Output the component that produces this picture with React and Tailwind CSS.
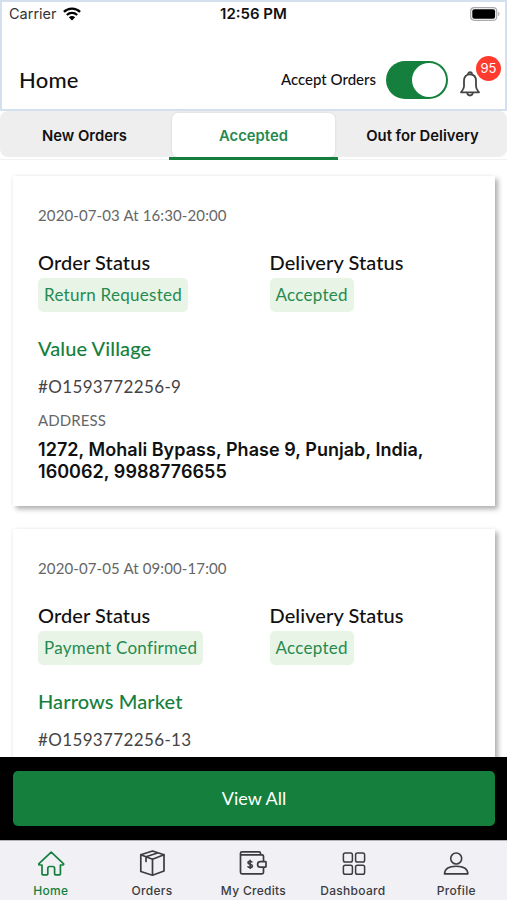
import React from "react";

const orders = [
  {
    id: "#O1593772256-9",
    date: "2020-07-03 At 16:30-20:00",
    status: "Return Requested",
    delivery: "Accepted",
    store: "Value Village",
    address: "1272, Mohali Bypass, Phase 9, Punjab, India, 160062, 9988776655",
  },
  {
    id: "#O1593772256-13",
    date: "2020-07-05 At 09:00-17:00",
    status: "Payment Confirmed",
    delivery: "Accepted",
    store: "Harrows Market",
  },
];

// Bottom tab icons
const HomeIcon = () => (
  <svg width="28" height="28" viewBox="0 0 28 28" fill="none" stroke="currentColor" strokeWidth="1.7" strokeLinejoin="round">
    <path d="M14.200 2.200 2 13.700c-.5.5-.3 1.300.5 1.300H5v9c0 .6.300.9.900.9h4c.6 0 .9-.3.900-.9v-5.500c0-1.300.8-2 1.900-2h3c1.100 0 1.900.7 1.900 2V24c0 .6.300.9.900.9h4c.6 0 .9-.3.900-.9v-9h2.500c.8 0 1-.8.500-1.300z" />
  </svg>
);

const BoxIcon = () => (
  <svg width="28" height="28" viewBox="0 0 28 28" fill="none" stroke="currentColor" strokeWidth="1.7" strokeLinejoin="round" strokeLinecap="round">
    <path d="M14.500 1 26 4.700V21L14.500 25.200 2.800 21.500V4.700z" />
    <path d="M2.800 4.700 14.500 9.200 26 4.700M14.500 9.200V25M8 11.500V6.800L19.500 3" />
  </svg>
);

const WalletIcon = () => (
  <svg width="30" height="28" viewBox="0 0 30 28" fill="none" stroke="currentColor" strokeWidth="1.700" strokeLinejoin="round">
    <path d="M25.500 11.500V6.300c0-.9-.6-1.500-1.500-1.500H2.500V22.300c0 .9.600 1.500 1.500 1.500h20c.9 0 1.500-.6 1.500-1.500v-5" />
    <path d="M2.500 4.800V3.300c0-.9.600-1.500 1.500-1.500h17c.9 0 1.500.6 1.500 1.500v1.500" />
    <path d="M27.500 11.700h-5.200c-1.700 0-2.700 1.200-2.700 2.700s1 2.700 2.700 2.700h5.200c.3 0 .5-.2.500-.5v-4.400c0-.3-.2-.5-.5-.5z" />
    <path d="M14.200 12.500c-.2-.8-1-1.200-2.100-1.200s-2.100.5-2.100 1.400c0 2.100 4.400 1.100 4.400 3.200 0 1-.9 1.500-2.300 1.500-1.200 0-2.200-.4-2.400-1.300M12.100 9.700v9.300" strokeWidth="1.600" />
  </svg>
);

const GridIcon = () => (
  <svg width="28" height="28" viewBox="0 0 28 28" fill="none" stroke="currentColor" strokeWidth="1.500">
    <rect x="4.400" y="3" width="9" height="9" rx="1.800" />
    <rect x="16.600" y="3" width="9" height="9" rx="1.800" />
    <rect x="4.400" y="15.200" width="9" height="9" rx="1.800" />
    <rect x="16.600" y="15.200" width="9" height="9" rx="1.800" />
  </svg>
);

const ProfileIcon = () => (
  <svg width="28" height="28" viewBox="0 0 28 28" fill="none" stroke="currentColor" strokeWidth="1.600" strokeLinejoin="round">
    <circle cx="14.200" cy="8.500" r="5.500" />
    <path d="M2.500 23.900c.2-4.900 3.900-7.700 11.700-7.700s11.500 2.800 11.700 7.700z" />
  </svg>
);

const BellIcon = () => (
  <svg width="22" height="26" viewBox="0 0 22 26" fill="none" stroke="currentColor" strokeWidth="1.800" strokeLinejoin="round">
    <path d="M11 3.300c-4 0-6 2.800-6 6.500v5.700c0 2-1 3.200-3 5.800h18c-2-2.600-3-3.800-3-5.800V9.800c0-3.700-2-6.500-6-6.500z" />
    <path d="M9 3.500c0-3 4-3 4 0M8.200 21.300c0 2 1.200 3.200 2.800 3.200s2.800-1.200 2.800-3.200" />
  </svg>
);

const WifiIcon = () => (
  <svg width="18" height="14" viewBox="0 0 18 14" fill="none" stroke="#000" strokeWidth="2.300">
    <path d="M.9 4.900C5.400.5 12.600.5 17.100 4.900M3.800 8c3-2.800 7.400-2.800 10.400 0" />
    <path d="M5.800 10.300c1.900-1.700 4.500-1.700 6.400 0L9 13.500z" fill="#000" stroke="none" />
  </svg>
);

const BatteryIcon = () => (
  <svg width="30" height="14" viewBox="0 0 30 14">
    <rect x=".7" y=".7" width="26" height="12.600" rx="3.500" fill="#fff" stroke="#aaa" strokeWidth="1.200" />
    <rect x="2.300" y="2.300" width="22.800" height="9.400" rx="2" fill="#000" />
    <path d="M28.200 4.800c1.700.6 1.700 3.800 0 4.400z" fill="#aaa" />
  </svg>
);

const tabs = [
  { label: "Home", icon: HomeIcon, className: "text-[#15803d]" },
  { label: "Orders", icon: BoxIcon, className: "text-[#3c3c40]" },
  { label: "My Credits", icon: WalletIcon, className: "text-[#3c3c40]" },
  { label: "Dashboard", icon: GridIcon, className: "pr-[4px] text-[#3c3c40]" },
  { label: "Profile", icon: ProfileIcon, className: "text-[#3c3c40]" },
];

function StatusBlock({ title, value }) {
  return (
    <div className="flex flex-col items-start">
      <p className="text-[20px] leading-[28px] font-medium tracking-[0.08px] text-[#111] whitespace-nowrap">{title}</p>
      <span className="mt-[2px] h-[34px] rounded-[5px] bg-[#e8f5e6] px-1.5 text-[17px] leading-[33px] tracking-[0.28px] text-[#268a50] whitespace-nowrap">
        {value}
      </span>
    </div>
  );
}

function OrderCard({ order }) {
  return (
    <div className="h-[330px] shrink-0 bg-white px-[25px] pt-[28px] shadow-[3px_3px_5px_rgba(0,0,0,0.32),-1px_-1px_3px_rgba(0,0,0,0.03)]">
      <p className="text-[15px] leading-[22px] tracking-[0.12px] text-[#666]">{order.date}</p>
      <div className="mt-[22px] grid grid-cols-[231.500px_1fr]">
        <StatusBlock title="Order Status" value={order.status} />
        <StatusBlock title="Delivery Status" value={order.delivery} />
      </div>
      <p className="mt-[22px] text-[20px] leading-[28px] font-medium tracking-[0.1px] text-[#15803d]">{order.store}</p>
      <p className="mt-[13px] text-[17px] leading-[24px] tracking-[0.36px] text-[#444]">{order.id}</p>
      {order.address && (
        <>
          <p className="mt-[11px] text-[15px] leading-[20px] tracking-[0.1px] text-[#666]">ADDRESS</p>
          <p className="mt-[9px] w-[410px] font-[Inter] text-[18px] leading-[21.500px] font-semibold tracking-[0.04px] text-[#111]">
            {order.address}
          </p>
        </>
      )}
    </div>
  );
}

export default function App() {
  return (
    <div className="flex h-[900px] w-[507px] flex-col overflow-hidden bg-white font-[Lato,sans-serif]">
      <header className="h-[111px] shrink-0 border-2 border-[#d5e0ef] bg-white">
        <div className="grid h-[24px] grid-cols-3 items-center pr-[5px] pl-[7px] font-[Inter] text-[15px] text-[#111]">
          <div className="flex items-center gap-1.5">
            <span className="text-[14.500px] text-[#333]">Carrier</span>
            <WifiIcon />
          </div>
          <span className="pr-[2px] text-center font-semibold">12:56 PM</span>
          <div className="flex justify-end">
            <BatteryIcon />
          </div>
        </div>
        <div className="mt-[22px] flex h-[64px] items-center pl-[17px]">
          <h1 className="flex-1 pb-[2px] text-[22px] font-medium tracking-[0.2px] text-[#111]">Home</h1>
          <span className="pb-px text-[15px] font-medium text-[#111]">Accept Orders</span>
          <div className="ml-[10px] flex h-[38px] w-[62px] items-center justify-end rounded-full bg-[#15803d] pr-[2px]">
            <div className="size-[34px] rounded-full bg-white" />
          </div>
          <div className="relative mt-[8px] mr-[24px] ml-[11px] text-[#444]">
            <BellIcon />
            <span className="absolute -top-[15px] left-[17px] flex size-[25px] items-center justify-center rounded-full bg-[#ff3b30] font-[Inter] text-[13px] text-white">
              95
            </span>
          </div>
        </div>
      </header>

      <nav className="h-[49px] shrink-0 border-b border-[#f2f2f2]">
        <div className="flex h-[46px] rounded-[8px] bg-[#eee] font-[Inter] text-[14.800px] font-semibold text-[#111]">
          <div className="flex w-[169px] items-center justify-center pt-1">New Orders</div>
          <div className="flex h-[49px] w-[169px] flex-col border-b-[3px] border-[#15803d] px-[3px] pt-[2px]">
            <div className="flex flex-1 items-center justify-center rounded-[6px] bg-white pt-[2px] text-[#268a50] shadow-[0_0_3px_rgba(0,0,0,0.1)]">
              Accepted
            </div>
          </div>
          <div className="flex w-[169px] items-center justify-center pt-1">Out for Delivery</div>
        </div>
      </nav>

      <main className="flex min-h-0 flex-1 flex-col gap-[22.500px] overflow-hidden pt-[16px] pr-[12px] pl-[13px]">
        {orders.map((order) => (
          <OrderCard key={order.id} order={order} />
        ))}
      </main>

      <div className="h-[83px] shrink-0 bg-black pt-[14px] pr-[12px] pl-[13px]">
        <button className="h-[55px] w-full rounded-[5px] bg-[#15803d] text-[18px] text-white">View All</button>
      </div>

      <footer className="grid h-[60px] shrink-0 grid-cols-5 border-t border-[#b5b5b8] bg-[#f0f0f5] pt-[9px]">
        {tabs.map(({ label, icon: Icon, className }) => (
          <div key={label} className={`flex flex-col items-center ${className}`}>
            <Icon />
            <span className="mt-[5px] font-[Inter] text-[12px] leading-[16px] font-medium tracking-[0.3px] whitespace-nowrap">{label}</span>
          </div>
        ))}
      </footer>
    </div>
  );
}
